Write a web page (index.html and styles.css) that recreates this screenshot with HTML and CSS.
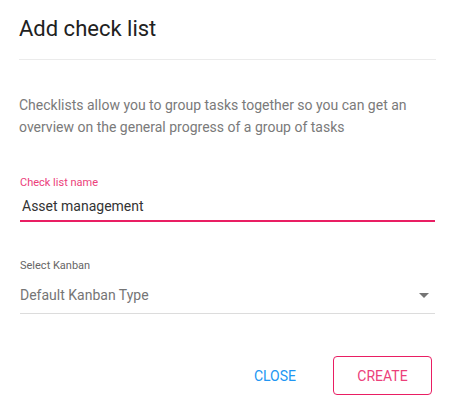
FILE: index.html
```html
<!DOCTYPE html>
<html>
<head>
<meta charset="utf-8">
<link rel="stylesheet" href="styles.css">
</head>
<body>
<div class="dialog">
  <h2 class="title">Add check list</h2>
  <div class="content">
    <p class="desc">Checklists allow you to group tasks together so you can get an overview on the general progress of a group of tasks</p>
    <div class="field focused">
      <label class="label">Check list name</label>
      <div class="value">Asset management</div>
    </div>
    <div class="field select">
      <label class="label">Select Kanban</label>
      <div class="value">Default Kanban Type<span class="arrow"></span></div>
    </div>
  </div>
  <div class="actions">
    <button class="btn close">CLOSE</button>
    <button class="btn create">CREATE</button>
  </div>
</div>
</body>
</html>
```
FILE: styles.css
```css
html, body { margin: 0; padding: 0; background: #fff; }
body { font-family: Roboto, "Noto Sans", sans-serif; width: 455px; height: 407px; overflow: hidden; }
.dialog { padding: 0 19px; }
.title {
  margin: 0;
  padding-top: 14px;
  height: 45px;
  font-size: 22px;
  font-weight: 400;
  line-height: 30px;
  color: #212121;
  border-bottom: 1px solid #ebebeb;
  box-sizing: content-box;
}
.content { padding-top: 34px; }
.desc {
  margin: 0;
  font-size: 14px;
  line-height: 22px;
  color: #7a7a7a;
}
.field { margin-left: 1px; margin-right: 1px; }
.field.focused { margin-top: 38px; border-bottom: 2px solid #e91e63; }
.label { display: block; font-size: 11px; line-height: 13px; }
.focused .label { color: #ec407a; }
.value { font-size: 14px; line-height: 20px; }
.focused .value { color: #333; padding: 7px 0 4px 2px; }
.field.select { margin-top: 37px; border-bottom: 1px solid #dcdcdc; }
.select .label { color: #666; }
.select .value { color: #757575; padding: 13px 0 8px; display: flex; justify-content: space-between; align-items: center; }
.arrow {
  width: 0; height: 0;
  border-left: 5px solid transparent;
  border-right: 5px solid transparent;
  border-top: 5px solid #757575;
  margin-right: 6px;
}
.actions {
  margin-top: 42px;
  display: flex;
  justify-content: flex-end;
  align-items: center;
  gap: 21px;
  padding-right: 4px;
}
.btn {
  font-family: Roboto, sans-serif;
  font-size: 14px;
  background: #fff;
  cursor: pointer;
  height: 39px;
  border-radius: 4px;
  letter-spacing: 0;
}
.close { border: none; color: #2196f3; padding: 0 16px; }
.create { border: 1px solid #e91e63; color: #ec407a; width: 99px; }
```
